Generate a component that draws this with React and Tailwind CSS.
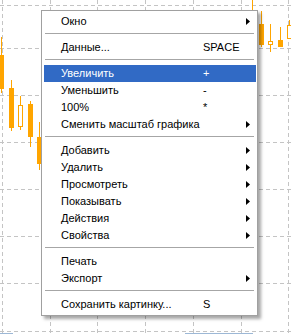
import React from "react";

const items = [
  { t: "Окно", arrow: true },
  { sep: true },
  { t: "Данные...", k: "SPACE" },
  { sep: true },
  { t: "Увеличить", k: "+", active: true },
  { t: "Уменьшить", k: "-" },
  { t: "100%", k: "*" },
  { t: "Сменить масштаб графика", arrow: true },
  { sep: true },
  { t: "Добавить", arrow: true },
  { t: "Удалить", arrow: true },
  { t: "Просмотреть", arrow: true },
  { t: "Показывать", arrow: true },
  { t: "Действия", arrow: true },
  { t: "Свойства", arrow: true },
  { sep: true },
  { t: "Печать" },
  { t: "Экспорт", arrow: true },
  { sep: true },
  { t: "Сохранить картинку...", k: "S" },
];

function Chart() {
  const hs = [5.5, 48.5, 95.5, 142.5, 189.5, 236.5, 283.5, 331.5];
  const vs = [2.5, 50.5, 97.5, 145.5, 193.5, 241.5, 288.5];
  const o = "#ffa500";
  return (
    <svg width="291" height="334" viewBox="0 0 291 334" className="block">
      <rect width="291" height="334" fill="#ffffff" />
      {hs.map((y) => (
        <line key={"h" + y} x1="0" x2="291" y1={y} y2={y} stroke="#c4c4c4" strokeDasharray="4 3" />
      ))}
      {vs.map((x) => (
        <line key={"v" + x} x1={x} x2={x} y1="0" y2="334" stroke="#c4c4c4" strokeDasharray="4 3" />
      ))}
      {/* left candles */}
      <line x1="1.5" x2="1.5" y1="37" y2="93" stroke={o} />
      <rect x="0" y="55" width="4" height="34" fill={o} />
      <line x1="11.5" x2="11.5" y1="80" y2="131" stroke={o} />
      <rect x="9" y="88" width="5" height="40" fill={o} />
      <line x1="20.5" x2="20.5" y1="96" y2="130" stroke={o} />
      <rect x="18.5" y="105.5" width="4" height="21" fill="#ffffff" stroke={o} />
      <line x1="30.5" x2="30.5" y1="101" y2="147" stroke={o} />
      <rect x="28" y="104" width="5" height="33" fill={o} />
      <line x1="39.5" x2="39.5" y1="122" y2="170" stroke={o} />
      <rect x="37" y="137" width="5" height="27" fill={o} />
      {/* right candles */}
      <line x1="252.5" x2="252.5" y1="0" y2="40" stroke={o} />
      <line x1="261.5" x2="261.5" y1="11" y2="47" stroke={o} />
      <rect x="259" y="24" width="5" height="21" fill={o} />
      <line x1="270.5" x2="270.5" y1="24" y2="52" stroke={o} />
      <rect x="268.5" y="41.5" width="4" height="3" fill="#ffffff" stroke={o} />
      <line x1="280.5" x2="280.5" y1="27" y2="40" stroke={o} />
      <rect x="278" y="40" width="5" height="7" fill={o} />
      <line x1="289.5" x2="289.5" y1="20" y2="26" stroke={o} />
      <rect x="287.5" y="25.5" width="4" height="13" fill="#ffffff" stroke={o} />
      {/* bottom blue strips */}
      <line x1="0" x2="13" y1="333.5" y2="333.5" stroke="#9db8d6" />
      <line x1="185" x2="253" y1="333.5" y2="333.5" stroke="#9db8d6" />
    </svg>
  );
}

function Arrow({ color }) {
  return (
    <svg width="4" height="7" viewBox="0 0 4 7" className="block">
      <path d="M0 0 L4 3.5 L0 7 Z" fill={color} />
    </svg>
  );
}

export default function App() {
  return (
    <div
      className="relative w-[291px] h-[334px] overflow-hidden bg-white"
      style={{ fontFamily: '"Liberation Sans", Arial, sans-serif' }}
    >
      <Chart />
      <div className="absolute left-[41px] top-[10px] w-[217px] border border-[#a0a0a0] bg-white py-[2px] shadow-[3px_3px_3px_rgba(0,0,0,0.35)]">
        {items.map((it, i) =>
          it.sep ? (
            <div key={i} className="h-[9px] pt-[3px] mx-[3px]">
              <div className="h-px bg-[#a6a6a6]" />
            </div>
          ) : (
            <div
              key={i}
              className={
                "ml-[2px] mr-[1px] h-[17px] flex items-center text-[11px] leading-[17px] " +
                (it.active ? "bg-[#316ac5] text-white" : "text-black")
              }
            >
              <span className="pl-[17px] w-[159px] shrink-0 whitespace-nowrap">{it.t}</span>
              <span className="flex-1 whitespace-nowrap">{it.k || ""}</span>
              {it.arrow ? (
                <span className="pr-[6px]">
                  <Arrow color={it.active ? "#ffffff" : "#000000"} />
                </span>
              ) : null}
            </div>
          )
        )}
      </div>
    </div>
  );
}
